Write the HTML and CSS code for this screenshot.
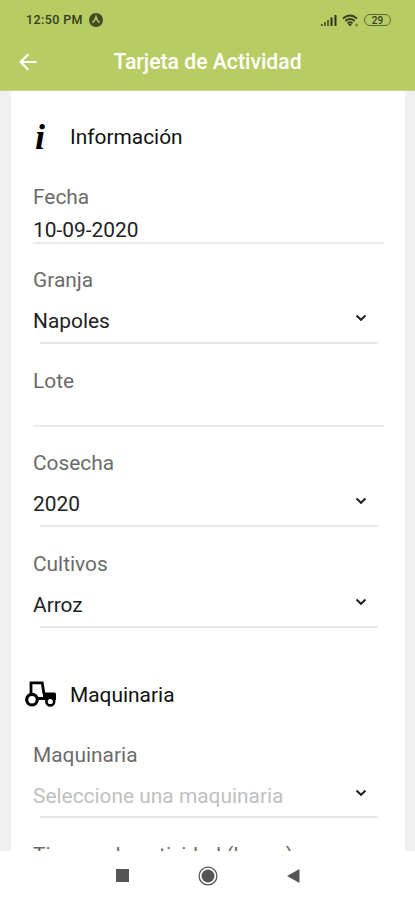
FILE: index.html
```html
<!DOCTYPE html>
<html lang="es">

<head>
    <meta charset="UTF-8">
    <meta name="viewport" content="width=device-width, initial-scale=1.0">
    <title>Tarjeta de Actividad</title>
    <link rel="stylesheet" href="styles.css">
</head>

<body>
    <header class="header">
        <div class="status">
            <span class="time">12:50 PM</span>
            <svg class="badge" width="14" height="14" viewBox="0 0 14 14">
                <circle cx="7" cy="7" r="7" fill="#414c24"/>
                <path d="M3.500 9.800Q6 7.500 7 4q1 3.500 3.500 5.800" fill="none" stroke="#b7cd63" stroke-width="1.500"/>
            </svg>
            <div class="status-icons">
                <svg width="16" height="12" viewBox="0 0 16 12">
                    <path d="M0 10h2v2H0zM3 8h2v4H3zM6 6h2v6H6z" fill="#59652f"/>
                    <path d="M9.500 3.500h2V12h-2zM13.500 1h2v11h-2z" fill="#2b321a"/>
                </svg>
                <svg width="17" height="13" viewBox="0 0 17 13">
                    <path d="M1 4.500Q8 -1.500 15 4.500M3.300 7Q8 3 12.700 7M5.500 9.300Q8 7.200 10.500 9.300" fill="none" stroke="#353d20" stroke-width="1.700"/>
                    <path d="M6 10h4l-2 2.500z" fill="#353d20"/>
                    <circle cx="14.500" cy="11" r="1.500" fill="#7b8a43"/>
                </svg>
                <span class="battery">29</span>
            </div>
        </div>
        <div class="toolbar">
            <svg class="back" width="18" height="18" viewBox="0 0 18 18" fill="none" stroke="#fff" stroke-width="2.200">
                <path d="M17.500 9H2M9.300 1.200 1.500 9l7.800 7.800"/>
            </svg>
            <h1 class="title">Tarjeta de Actividad</h1>
        </div>
    </header>

    <main class="card">
        <section>
            <div class="section-head">
                <span class="info-icon">i</span>
                <h2>Información</h2>
            </div>
            <div class="field input">
                <div class="label">Fecha</div>
                <div class="value date">10-09-2020</div>
            </div>
            <div class="field select">
                <div class="label">Granja</div>
                <div class="value">Napoles
                    <svg class="chevron" width="12" height="8" viewBox="0 0 12 8"><path d="m1.500 1.500 4.500 4.300 4.500-4.300"/></svg>
                </div>
            </div>
            <div class="field input">
                <div class="label">Lote</div>
                <div class="value empty"></div>
            </div>
            <div class="field select">
                <div class="label">Cosecha</div>
                <div class="value">2020
                    <svg class="chevron" width="12" height="8" viewBox="0 0 12 8"><path d="m1.500 1.500 4.500 4.300 4.500-4.300"/></svg>
                </div>
            </div>
            <div class="field select">
                <div class="label">Cultivos</div>
                <div class="value">Arroz
                    <svg class="chevron" width="12" height="8" viewBox="0 0 12 8"><path d="m1.500 1.500 4.500 4.300 4.500-4.300"/></svg>
                </div>
            </div>
        </section>

        <section class="machinery">
            <div class="section-head">
                <svg class="tractor" width="32" height="26" viewBox="0 0 32 26" fill="none" stroke="#000">
                    <path d="M6 12.500V1.800h11.200L19 13" stroke-width="2.800"/>
                    <path d="M18 11.500h11.500q1.500 0 1.500 2v5.500H11v-3h7z" fill="#000" stroke="none"/>
                    <circle cx="7" cy="18.700" r="5.300" fill="#fff" stroke-width="3.200"/>
                    <circle cx="25.300" cy="20.500" r="3.900" fill="#fff" stroke-width="2.600"/>
                </svg>
                <h2>Maquinaria</h2>
            </div>
            <div class="field select">
                <div class="label">Maquinaria</div>
                <div class="value placeholder">Seleccione una maquinaria
                    <svg class="chevron" width="12" height="8" viewBox="0 0 12 8"><path d="m1.500 1.500 4.500 4.300 4.500-4.300"/></svg>
                </div>
            </div>
            <div class="field">
                <div class="label">Tiempo de actividad (horas)</div>
            </div>
        </section>
    </main>

    <nav class="navbar">
        <svg width="13" height="13" viewBox="0 0 13 13"><rect width="13" height="13" fill="#555"/></svg>
        <svg width="20" height="20" viewBox="0 0 20 20">
            <circle cx="10" cy="10" r="8.900" fill="none" stroke="#555" stroke-width="1.300"/>
            <circle cx="10" cy="10" r="6.500" fill="#555"/>
        </svg>
        <svg width="13" height="14" viewBox="0 0 13 14"><path d="M0 7 12.500 0v14z" fill="#555"/></svg>
    </nav>
</body>

</html>
```

FILE: styles.css
```css
* {
    box-sizing: border-box;
}

body {
    margin: 0;
    height: 900px;
    display: flex;
    flex-direction: column;
    overflow: hidden;
    background-color: #f0f0f0;
    font-family: Roboto, sans-serif;
    font-size: 20.9px;
    line-height: 24px;
    color: #222;
}

.header {
    flex: none;
    height: 91px;
    background-color: #b7cd63;
    border-bottom: 1px solid #c5d38b;
}

.status {
    display: flex;
    align-items: center;
    height: 40px;
    padding: 0 24px 0 26px;
    color: #353d20;
}

.time {
    font-size: 12.5px;
    font-weight: 500;
    letter-spacing: 0.4px;
}

.badge {
    margin-left: 6px;
}

.status-icons {
    display: flex;
    align-items: center;
    gap: 5px;
    margin-left: auto;
}

.battery {
    width: 27px;
    height: 12px;
    border: 1.5px solid #5b6834;
    border-radius: 6px;
    font-size: 10px;
    font-weight: 500;
    line-height: 11px;
    text-align: center;
}

.toolbar {
    display: grid;
    grid-template-columns: 18px 1fr 18px;
    align-items: center;
    height: 44px;
    padding: 0 19px;
}

.title {
    margin: 0;
    font-size: 21.2px;
    font-weight: 500;
    text-align: center;
    color: #fff;
}

.card {
    flex: 1;
    min-height: 0;
    margin: 0 10px 0 11px;
    padding: 34px 21px 0 22px;
    overflow: hidden;
    background-color: #fff;
}

.section-head {
    display: flex;
    align-items: center;
    height: 24px;
    margin-left: -8px;
    margin-bottom: 36px;
}

.section-head h2 {
    margin: 0;
    font-size: 20.9px;
    font-weight: 400;
    color: #111;
}

.info-icon {
    width: 45px;
    padding-left: 10px;
    font-family: "Liberation Serif", serif;
    font-size: 36px;
    font-style: italic;
    font-weight: 700;
    color: #000;
}

.tractor {
    margin-top: -2px;
    margin-right: 13px;
}

.machinery {
    margin-top: 55px;
}

.field {
    margin-bottom: 24px;
}

.label {
    height: 24px;
    color: #6b6b6b;
    white-space: nowrap;
}

.value {
    display: flex;
    align-items: center;
    justify-content: space-between;
    height: 24px;
}

.input {
    border-bottom: 2px solid #ebebeb;
}

.date {
    margin-top: 9px;
}

.empty {
    height: 32px;
}

.select {
    margin-bottom: 25px;
    padding-bottom: 11px;
    background: linear-gradient(#e8e8e8, #e8e8e8) 7px 100% / 338px 2px no-repeat;
}

.select .value {
    margin-top: 17px;
    padding-right: 17px;
}

.select .placeholder {
    color: #c0c0c0;
}

.machinery .select {
    margin-bottom: 25px;
    padding-bottom: 10px;
}

.chevron {
    margin-top: -6px;
    fill: none;
    stroke: #222;
    stroke-width: 2;
}

.navbar {
    flex: none;
    display: flex;
    align-items: center;
    justify-content: center;
    gap: 69px;
    height: 49px;
    background-color: #fff;
}
```
